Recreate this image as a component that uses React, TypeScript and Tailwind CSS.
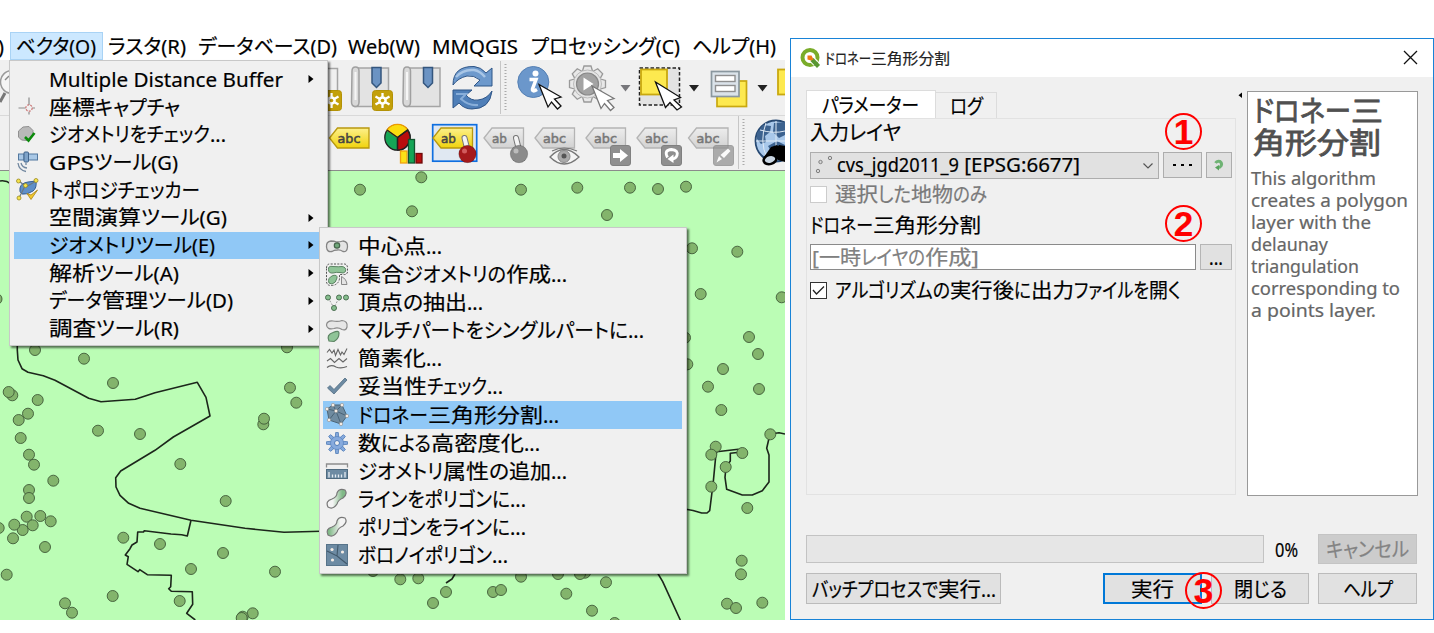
import React, { useLayoutEffect, useRef, useState } from "react";

type Seg = [text: string, width: number];

/* One run of text, scaled horizontally so that it fills the given width. */
function Fit({ text, width }: { text: string; width: number }) {
  const ref = useRef<HTMLSpanElement>(null);
  const [scale, setScale] = useState(1);
  useLayoutEffect(() => {
    if (ref.current && ref.current.offsetWidth > 0) {
      setScale(width / ref.current.getBoundingClientRect().width);
    }
  }, []);
  return (
    <span className="inline-block shrink-0 whitespace-pre" style={{ width }}>
      <span ref={ref} className="inline-block origin-left whitespace-pre" style={{ transform: `scaleX(${scale})` }}>
        {text}
      </span>
    </span>
  );
}

function Text({ segs, className = "" }: { segs: Seg[]; className?: string }) {
  return (
    <span className={`flex shrink-0 whitespace-pre ${className}`}>
      {segs.map(([t, w], i) => (
        <Fit key={i} text={t} width={w} />
      ))}
    </span>
  );
}

/* ------------------------------------------------------------------ map */

const POINTS: [number, number][] = [
  [35, 350], [84, 358.7], [113, 383], [12.3, 395.3], [8.7, 392], [37.7, 400], [28, 413.7], [18.7, 420],
  [98, 430.7], [140, 434], [20.7, 438], [29, 454.7], [34, 464.7], [180.3, 464], [53.3, 480.7], [29, 490],
  [29, 498], [225.7, 501], [26.7, 516.7], [40.3, 516], [50.7, 521.3], [22.7, 530], [14.3, 524.7], [32.7, 525.3],
  [-1.3, 528], [13, 538.3], [45, 547], [123.3, 537.7], [160, 544], [223, 553], [191, 569], [275, 571.7],
  [6.7, 574.7], [112.7, 596], [65, 603.3], [72, 612.7], [179.7, 601], [252.7, 613.3], [242.7, 616.7], [241.7, 618],
  [290, 387.7], [296.3, 402.7], [263.3, 424.3], [264, 418.7], [287, 347.3], [-3.5, 299],
  [360, 189.7], [421.3, 177.3], [412, 211.3], [521, 189.7], [577.3, 187.7], [630, 187.7], [658, 189], [686, 186.7],
  [607, 215], [692, 248.3], [737.3, 251.7], [700.7, 294], [781.7, 297.3], [749, 337], [685, 337.7], [758, 354],
  [687.3, 364.3], [723, 369], [708, 386.7], [759, 389], [721.3, 410], [770.3, 434.3], [715.7, 446.7], [711.3, 454.7],
  [742.3, 453], [725.7, 467], [711.3, 486.7], [747.3, 508], [741.7, 560.7], [741, 574.3], [762.3, 602.7], [727, 603.7],
  [736, 608], [606, 582.3], [558, 574], [585, 572.7], [580, 574], [566.3, 593.7], [592, 610.7], [614.7, 623],
  [400.3, 579.3], [418.3, 578.3], [521, 576.7], [373, 571], [433, 603], [446, 592], [493, 592], [501, 590],
];

const LINES = [
  "M17.3 345V350L18 360L22 368.7L28 372.3L43.3 375.7L55 380.3L88.7 398.3L101 401.7L135.3 399.3L155 392.7L197.3 382.3L206 397.3L210 416L173.3 437L155 450.3L120.7 471L115.7 477.7L116 487L120 495.3L128.7 503.3L140 508.3L191 520.3L245 528.3L284 532.3L330 531",
  "M191 520.3L187.3 536L181.7 534.7L171 534L144.3 530.7L143.5 532L137.7 532L137 542L132 545L130 548.7L125.3 555L128.3 556.7L127 564.3L138 571.7L139.7 569.7L147.3 574.7L171.3 575.3L170.7 586.7L168.7 588.7L171.3 591.3L192.3 591.7L192.7 604.3L186.7 613.3L195.3 620",
  "M785 434L779 432.7L770 434L766.7 448.3L769 455V482L762.3 490.7L752.3 495H742.3L726.7 489.3L725 477.3L726 467L730.3 461V453.3L742 452L738.3 449.3L716.7 451.7L715.7 456.7L713.3 481.7L709.7 510.7L707 513H701.7L693 510.5L686 509.3",
  "M657 572L662.7 581.7L680.3 620",
  "M455 574L452 579L446 583",
  "M0 181Q6 180 11 184",
];

function MapCanvas() {
  return (
    <div className="h-[450px] w-[785px] shrink-0 overflow-hidden border-t border-[#8b8b8b] bg-[#bbfdb5]">
      <svg width="785" height="449" viewBox="0 171 785 449" className="block">
        {LINES.map((d) => (
          <path key={d} d={d} fill="none" stroke="#1c261b" strokeWidth="1.6" strokeLinejoin="round" />
        ))}
        {POINTS.map(([x, y], i) => (
          <circle key={i} cx={x} cy={y} r="5.5" fill="#83b46c" stroke="#3f5a38" strokeWidth="0.9" />
        ))}
      </svg>
    </div>
  );
}

/* ------------------------------------------------------------- toolbars */

/* A slice of the toolbar between x and x + w; children use window coordinates. */
function Slot({ x, w, y, children }: { x: number; w: number; y: number; children?: React.ReactNode }) {
  return (
    <svg width={w} height="55" viewBox={`${x} ${y} ${w} 55`} className="block shrink-0">
      {children}
    </svg>
  );
}

function Star({ x, y }: { x: number; y: number }) {
  return (
    <g transform={`translate(${x} ${y})`}>
      <rect x="0.5" y="0.5" width="20" height="20" rx="3" fill="#c3a00a" stroke="#b39206" />
      <path d="M10.5 3V18M3.5 6.5L17.5 14.5M3.5 14.5L17.5 6.5" stroke="#fff" strokeWidth="2.3" />
      <circle cx="10.5" cy="10.5" r="4.3" fill="#fff" />
      <circle cx="10.5" cy="10.5" r="1.8" fill="#c3a00a" />
    </g>
  );
}

function Scroll({ x }: { x: number }) {
  return (
    <g transform={`translate(${x} 66)`}>
      <path d="M8 2H38.5V40.5H6Q9 38 8.500 34Z" fill="#e3e3e3" stroke="#a5a5a5" strokeWidth="1.5" />
      <path d="M2 5Q2 1 5.500 1Q9 1 9 5V36Q9 40.500 5.500 40.500Q1.500 40.500 1.500 36Z" fill="#d9d9d9" stroke="#a0a0a0" strokeWidth="1.500" />
      <path d="M5.500 6V34" stroke="#f6f6f6" strokeWidth="2" />
      <path d="M22 1.500H31V17L26.500 21.500L22 17Z" fill="#6b93c3" stroke="#34567e" strokeWidth="1.500" />
    </g>
  );
}

function Down({ x, fill }: { x: number; fill: string }) {
  return <path d={`M${x} 85H${x + 10}L${x + 5} 91.500Z`} fill={fill} />;
}

function Cursor({ x, y, stroke }: { x: number; y: number; stroke: string }) {
  return (
    <path
      transform={`translate(${x} ${y})`}
      d="M0 0L22 12.500L15.500 14.500L22 21.500L18.500 24.500L12.500 17.500L9 22.500Z"
      fill="#fff"
      stroke={stroke}
      strokeWidth="1.300"
    />
  );
}

function TagShape({ x, text = "abc", active = false }: { x: number; text?: string; active?: boolean }) {
  return (
    <g>
      <path
        d={`M${x} 138L${x + 8} 128H${x + 39.500}V148H${x + 8}Z`}
        fill={active ? "url(#tagYellow)" : "url(#tagGray)"}
        stroke={active ? "#b8980f" : "#b4b4b4"}
        strokeWidth="1.300"
      />
      <text
        x={x + 8}
        y="143"
        textLength={text === "ab" ? 15 : 23}
        lengthAdjust="spacingAndGlyphs"
        fontSize="12.500"
        stroke={active ? "#444" : "#777"}
        strokeWidth="0.500"
        className={active ? "fill-[#444] font-['DejaVu_Sans',sans-serif]" : "fill-[#777] font-['DejaVu_Sans',sans-serif]"}
      >
        {text}
      </text>
    </g>
  );
}

function Badge({ x, children }: { x: number; children: React.ReactNode }) {
  return (
    <g transform={`translate(${x} 145)`}>
      <rect x="0.500" y="0.500" width="20" height="20" rx="2.500" fill="#8f8f8f" stroke="#808080" />
      {children}
    </g>
  );
}

function Pin({ x, fill, shine }: { x: number; fill: string; shine: string }) {
  return (
    <g>
      <path d={`M${x} 150L${x - 3} 138`} stroke="#777" strokeWidth="6" strokeLinecap="round" />
      <path d={`M${x} 150L${x - 3} 138`} stroke="#f4f4f4" strokeWidth="4" strokeLinecap="round" />
      <circle cx={x} cy="154" r="8.700" fill={fill} stroke="#0003" />
      <circle cx={x - 3} cy="151" r="2.500" fill={shine} opacity="0.600" />
    </g>
  );
}

const GEAR_ANGLES = [0, 45, 90, 135, 180, 225, 270, 315];

function TopToolbar() {
  return (
    <div className="flex h-[55px] w-[785px] shrink-0 overflow-hidden bg-[#f0f0f0]">
      <Slot x={0} w={345} y={60}>
        <circle cx="12" cy="82" r="11.500" fill="#f5f5f5" stroke="#999" strokeWidth="1.500" />
        <path d="M5 80L9 76" stroke="#888" strokeWidth="1.500" />
        <path d="M0 102L5 93" stroke="#777" strokeWidth="3" />
        <path d="M326 68.500H337.500V108" fill="none" stroke="#a5a5a5" strokeWidth="1.500" />
        <Star x={321} y={90} />
      </Slot>
      <Slot x={345} w={51} y={60}>
        <Scroll x={350} />
        <Star x={372} y={90} />
      </Slot>
      <Slot x={396} w={50} y={60}>
        <Scroll x={401.5} />
      </Slot>
      <Slot x={446} w={53} y={60}>
        <path d="M453 85Q453 66 474 66.500Q481 67 486 73L492 68V86H474L480 80Q474 75 467 76Q458 78 453 85Z" fill="#6d99cc" stroke="#2f5688" />
        <path d="M456 77Q463 69 474 70Q480 71 485 77" fill="none" stroke="#a9c6e6" strokeWidth="2.500" />
        <path d="M492 91Q490 109 472 109Q464 109 459 103L453 108V90H472L466 95Q471 101 478 100Q487 99 492 91Z" fill="#4f7fb8" stroke="#2f5688" />
        <path d="M456 94H466L461 99Q469 106 478 105" fill="none" stroke="#88aed9" strokeWidth="2" />
      </Slot>
      <Slot x={499} w={12} y={60}>
        <path d="M500.500 61V114" stroke="#c6c6c6" />
        <path d="M505.500 64V112" stroke="#aaa" strokeWidth="2" strokeDasharray="1 2" />
      </Slot>
      <Slot x={511} w={54} y={60}>
        <circle cx="533.300" cy="82" r="15.500" fill="#6b97cb" stroke="#5580b4" />
        <circle cx="535.500" cy="73.500" r="3" fill="#fff" />
        <path d="M529.500 79.500H536L532.500 89Q532 92.500 537 89.500" fill="none" stroke="#fff" strokeWidth="3.500" />
        <Cursor x={539} y={84.5} stroke="#111" />
      </Slot>
      <Slot x={565} w={52} y={60}>
        <g transform="translate(587.500 84)">
          {GEAR_ANGLES.map((a) => (
            <path key={a} transform={`rotate(${a})`} d="M-5 -13L-3.500 -18H3.500L5 -13" fill="#e8e8e8" stroke="#999" strokeWidth="1.300" />
          ))}
          <circle r="14" fill="#e4e4e4" stroke="#b0b0b0" strokeWidth="0.800" />
          <circle r="11" fill="#a3a3a3" stroke="#888" strokeWidth="1.200" />
          <path d="M-4 -6.500L6 0L-4 6.500Z" fill="#fff" />
        </g>
        <Cursor x={592} y={86} stroke="#777" />
      </Slot>
      <Slot x={617} w={18} y={60}>
        <Down x={620.5} fill="#77777b" />
      </Slot>
      <Slot x={635} w={51} y={60}>
        <rect x="639.500" y="68" width="40" height="37" fill="#e3e3e3" stroke="#222" strokeWidth="1.500" strokeDasharray="3.500 2" />
        <rect x="641" y="69.500" width="26" height="25" fill="#fde94f" stroke="#c9a80f" strokeWidth="1.800" />
        <path d="M655.500 82L680.500 97.500L674 100L681.500 107L677 110L670 102.500L665.500 107.500Z" fill="#fff" stroke="#111" strokeWidth="1.300" />
      </Slot>
      <Slot x={686} w={16} y={60}>
        <Down x={689} fill="#222" />
      </Slot>
      <Slot x={702} w={52} y={60}>
        <rect x="717" y="81" width="29.500" height="25.500" fill="#fde94f" stroke="#c9a80f" strokeWidth="1.700" />
        <rect x="711.500" y="71.500" width="27.500" height="25" fill="#dbe3ea" stroke="#8a979f" strokeWidth="1.700" />
        <rect x="715.500" y="75.500" width="19.500" height="6" fill="#fff" stroke="#8f8f8f" strokeWidth="1.400" />
        <rect x="715.500" y="85.500" width="19.500" height="6" fill="#fff" stroke="#8f8f8f" strokeWidth="1.400" />
      </Slot>
      <Slot x={754} w={20} y={60}>
        <Down x={757.5} fill="#222" />
      </Slot>
      <Slot x={774} w={11} y={60}>
        <rect x="778" y="69.500" width="20" height="25" fill="#fde94f" stroke="#c9a80f" strokeWidth="1.800" />
      </Slot>
    </div>
  );
}

function LabelToolbar() {
  return (
    <div className="flex h-[55px] w-[785px] shrink-0 overflow-hidden border-t border-[#d9d9d9] bg-[#f0f0f0]">
      <Slot x={0} w={374} y={116}>
        <defs>
          <linearGradient id="tagYellow" x1="0" x2="0" y1="0" y2="1">
            <stop offset="0" stopColor="#fdf08b" />
            <stop offset="1" stopColor="#f0d30c" />
          </linearGradient>
          <linearGradient id="tagGray" x1="0" x2="0" y1="0" y2="1">
            <stop offset="0" stopColor="#ededed" />
            <stop offset="1" stopColor="#d2d2d2" />
          </linearGradient>
        </defs>
        <TagShape x={329.5} active />
      </Slot>
      <Slot x={374} w={56} y={116}>
        <g stroke="#222" strokeWidth="1.300">
          <circle cx="397.500" cy="137.500" r="12.700" fill="#15a556" />
          <path d="M397.500 137.500L387 130A12.700 12.700 0 0 1 408 130Z" fill="#fbdc0e" stroke="#ee9b00" />
          <path d="M397.500 137.500L407.500 130A12.700 12.700 0 0 1 397.500 150.200Z" fill="#b90d0d" />
          <path d="M397.500 137.500L387 130M397.500 137.500L408 130M397.500 137.500V150" />
        </g>
        <rect x="400.500" y="151" width="6.500" height="12" fill="#fbe117" stroke="#f0a010" strokeWidth="1.300" />
        <rect x="408.500" y="139.500" width="6" height="23.500" fill="#15a556" stroke="#14532e" strokeWidth="1.300" />
        <rect x="416" y="153.500" width="6" height="9.500" fill="#b90d0d" stroke="#6f0a0a" strokeWidth="1.300" />
      </Slot>
      <Slot x={430} w={50} y={116}>
        <rect x="432.700" y="124.700" width="44" height="36.500" fill="#e0e8f2" stroke="#0f6fe0" strokeWidth="1.700" />
        <TagShape x={433} text="ab" active />
        <Pin x={467.5} fill="#a51a1c" shine="#e88" />
      </Slot>
      <Slot x={480} w={52} y={116}>
        <TagShape x={484} text="ab" />
        <Pin x={519} fill="#8b8b8b" shine="#ddd" />
      </Slot>
      <Slot x={532} w={50} y={116}>
        <TagShape x={535} />
        <path d="M550 157Q564 142 579 157Q564 171 550 157Z" fill="#f4f4f4" stroke="#777" strokeWidth="1.300" />
        <path d="M552 151Q564 145 577 151" fill="none" stroke="#777" strokeWidth="1.200" />
        <circle cx="564" cy="156.500" r="6" fill="#aaa" stroke="#888" />
        <circle cx="564" cy="156" r="2.500" fill="#555" />
      </Slot>
      <Slot x={582} w={52} y={116}>
        <TagShape x={586} />
        <Badge x={610}>
          <path d="M3 8H10V4L18 10.500L10 17V13H3Z" fill="#fff" />
        </Badge>
      </Slot>
      <Slot x={634} w={50} y={116}>
        <TagShape x={637} />
        <Badge x={661}>
          <path d="M6.500 12.500Q2.500 5 10.500 4.500Q17.500 5 16 10.500Q14.500 14 11 14" fill="none" stroke="#fff" strokeWidth="2.800" />
          <path d="M12.500 9.500V18L6.500 14Z" fill="#fff" />
        </Badge>
      </Slot>
      <Slot x={684} w={52} y={116}>
        <TagShape x={688.5} />
        <g opacity="0.700">
          <Badge x={713}>
            <path d="M3.500 17.500L6 11L9 14ZM7.500 10L15 3.500L17.500 6L11 13Z" fill="#fff" />
          </Badge>
        </g>
      </Slot>
      <Slot x={736} w={14} y={116}>
        <path d="M738.500 116V169" stroke="#c6c6c6" />
        <path d="M743.500 119V167" stroke="#aaa" strokeWidth="2" strokeDasharray="1 2" />
      </Slot>
      <Slot x={750} w={35} y={116}>
        <circle cx="776" cy="141" r="20.500" fill="#a9c8ea" stroke="#284a73" strokeWidth="1.800" />
        <path d="M757 133L763 125L771 126L770 132L765 136L766 142L761 144L757 139ZM774 123L785 122V135L779 138L773 132ZM768 146L777 141L785 145V158H775Z" fill="#3c628f" />
        <path d="M776 121V161M756 141H785M766 123Q759 141 767 158M760 130Q774 134 785 131" fill="none" stroke="#dfeaf5" />
        <path d="M774 151L779 145L785 146V162L778 160Z" fill="#000" />
        <path d="M764 157L771 147L777 145L783 151L777 160Z" fill="#000" />
        <ellipse cx="770" cy="159.500" rx="6.500" ry="4.500" fill="#c9d6e3" stroke="#000" strokeWidth="2.500" transform="rotate(-15 770 159.500)" />
      </Slot>
    </div>
  );
}

/* ---------------------------------------------------------------- menus */

const svgBox = { width: 24, height: 24, viewBox: "0 0 24 24", className: "block shrink-0 overflow-visible" };

const icons: Record<string, React.ReactNode> = {
  cross: (
    <svg {...svgBox}>
      <path d="M13 2.500V10M13 17V19.500M2.500 13H9.500M16.500 13H19" stroke="#8b8b8b" strokeWidth="1.200" />
      <circle cx="13" cy="13" r="3.200" fill="none" stroke="#c97070" strokeWidth="1.200" strokeDasharray="2 1.200" />
    </svg>
  ),
  check: (
    <svg {...svgBox}>
      <path d="M2.500 8L7 4L13 3.500L17 7.500L16.500 13.500L11.500 17.500L5.500 17L2.500 14Z" fill="#b9b9b9" stroke="#909090" />
      <path d="M9 14L12.500 17.500L18.500 10" fill="none" stroke="#0b8a0b" strokeWidth="2.600" />
    </svg>
  ),
  gps: (
    <svg {...svgBox}>
      <rect x="2.500" y="4" width="5.500" height="6" fill="#a9c8e6" stroke="#53789f" />
      <rect x="12.500" y="4" width="9" height="6" fill="#a9c8e6" stroke="#53789f" />
      <rect x="8" y="2" width="4.500" height="10" rx="1" fill="#7ea3c9" stroke="#41648b" />
      <path d="M10 12.500V15M2 13Q3 20.500 10 21.500M5 13Q6 17.500 11 18" fill="none" stroke="#71879f" strokeWidth="1.300" />
    </svg>
  ),
  topology: (
    <svg {...svgBox}>
      <path d="M4 10Q5 5 12 4L20 3Q21 10 17 13Q11 17 6 16Q3 14 4 10Z" fill="#5f8fc8" stroke="#365f94" />
      <path d="M3 3L9 8L3 20M20 3L10 9" stroke="#6a7880" strokeWidth="1.200" fill="none" />
      <path d="M11 15.500L15 21.500L21.500 12L15 17Z" fill="#f3c82c" stroke="#a88413" strokeWidth="0.800" />
      {[[2.500, 3], [20, 2.500], [9.500, 7.500], [3, 20]].map(([x, y]) => (
        <circle key={`${x}-${y}`} cx={x} cy={y} r="2" fill="#f5e34b" stroke="#9b8a25" strokeWidth="0.800" />
      ))}
    </svg>
  ),
  centroid: (
    <svg {...svgBox}>
      <path d="M1.500 13Q1 7.500 6 7Q9 7 12 8Q15 8 18 7Q23 7.500 22.500 13Q22 18.500 18 17.500Q15 15.500 12 16Q9 16 7 17.500Q2 18.500 1.500 13Z" fill="#e4e4e4" stroke="#858585" strokeWidth="1.300" />
      <circle cx="12" cy="11.500" r="2.700" fill="#6fa77a" stroke="#46644b" strokeWidth="1.200" />
    </svg>
  ),
  collect: (
    <svg {...svgBox}>
      <path d="M1.500 5Q1.500 0.500 6 1H18Q22.500 0.500 22.500 5V9Q22 12 18 11.500H14.500V16Q13 22.500 6 22.500Q1 22.500 1.500 17Z" fill="none" stroke="#555" strokeDasharray="2 1.300" />
      <path d="M3.500 6.500Q3 2.500 8 3.500Q14 4 17 3.500Q21.500 4 20.500 8.500Q18.500 11 15 9.500Q11 9 8 10Q3.500 10.500 3.500 6.500Z" fill="#8fc497" stroke="#5c8463" />
      <path d="M4 20Q2 15 8 12.500Q12.500 11.500 12 15Q11 20 7 21Z" fill="#8fc497" stroke="#5c8463" />
      <path d="M16.500 13.500Q21.500 16 22 21.500H16.500Z" fill="#e4e4e4" stroke="#888" />
    </svg>
  ),
  vertices: (
    <svg {...svgBox}>
      <path d="M3 6.500L9 17L14 6.500H21" fill="none" stroke="#999" strokeDasharray="2 1.500" />
      {[[3, 6.500], [14, 6.500], [21, 6.500], [9, 17]].map(([x, y]) => (
        <circle key={`${x}-${y}`} cx={x} cy={y} r="2.500" fill="#85bd8d" stroke="#4c7052" />
      ))}
    </svg>
  ),
  single: (
    <svg {...svgBox}>
      <path d="M1.500 6Q2 1.500 8 2Q13 3 17 1.500Q23 2 22 8Q21 12 17 10.500Q13 8 9 9.500Q2 11 1.500 6Z" fill="#e6e6e6" stroke="#8a8a8a" strokeWidth="1.200" />
      <path d="M4 22Q1 16 8 13.500Q14 11 14 14Q14 20 9 22.500Z" fill="#8fc497" stroke="#5c8463" strokeWidth="1.200" />
    </svg>
  ),
  simplify: (
    <svg {...svgBox}>
      <path d="M2 5.500L4.500 2.500L7 6L9 3L10.500 8.500L13 2.500L15.500 8L17 5L19 7.500L22 1.500" fill="none" stroke="#666" strokeWidth="1.100" />
      <path d="M2 14L5.500 11.500L9.500 15.500L14 11.500L18 15L22 11.500" fill="none" stroke="#666" strokeWidth="1.100" />
      <path d="M2 20.500Q6 17 11 20Q16 22 22 19.500" fill="none" stroke="#666" strokeWidth="1.100" />
    </svg>
  ),
  valid: (
    <svg {...svgBox}>
      <path d="M2.500 13L5 10.500L9 14.500L20 3L22 5L9 19Z" fill="#6d8ba3" stroke="#4f6b80" strokeWidth="0.800" />
    </svg>
  ),
  delaunay: (
    <svg {...svgBox}>
      <path d="M2 6L8 2H17L22 13L16 21L4 17Z" fill="#6f8ba0" stroke="#4c6577" />
      <path d="M2 6L11 8L8 2M11 8L17 2M11 8L22 13M11 8L16 21M11 8L4 17" fill="none" stroke="#465f72" strokeWidth="0.900" />
      {[[2, 6], [8, 2], [17, 2], [22, 13], [16, 21], [4, 17], [11, 8]].map(([x, y]) => (
        <circle key={`${x}-${y}`} cx={x} cy={y} r="1.700" fill="#f4ece5" stroke="#8d8d8d" strokeWidth="0.600" />
      ))}
    </svg>
  ),
  gear: (
    <svg {...svgBox}>
      <g transform="translate(12 12)">
        {[0, 45, 90, 135, 180, 225, 270, 315].map((a) => (
          <path key={a} transform={`rotate(${a})`} d="M-1.800 -5L-1.300 -10.500H1.300L1.800 -5" fill="#86aadd" stroke="#4f7cb8" strokeWidth="0.800" />
        ))}
        <circle r="6.500" fill="#86aadd" stroke="#4f7cb8" strokeWidth="0.600" />
        <circle r="2.500" fill="#f0f0f0" stroke="#4f7cb8" />
      </g>
    </svg>
  ),
  ruler: (
    <svg {...svgBox}>
      <path d="M1.500 8.500V5H22.500V8.500" fill="none" stroke="#8d8d8d" strokeWidth="1.300" />
      <rect x="1.500" y="10.500" width="21" height="9" fill="#6d8ba3" stroke="#4f6b80" />
      <path d="M4 18.500V13M7.500 18.500V15.500M10.500 18.500V15.500M13.500 18.500V15.500M16.500 18.500V15.500M20 18.500V13" stroke="#e5ecf1" strokeWidth="1.300" />
    </svg>
  ),
  toPolygon: (
    <svg {...svgBox}>
      <path d="M3 20Q0 14 7 12Q12 10 12 6Q14 1 20 3Q23 7 18 11Q13 13 12 17Q8 23 3 20Z" fill="url(#greenRight)" stroke="#777" strokeWidth="1.200" />
    </svg>
  ),
  toLine: (
    <svg {...svgBox}>
      <path d="M3 20Q0 14 7 12Q12 10 12 6Q14 1 20 3Q23 7 18 11Q13 13 12 17Q8 23 3 20Z" fill="url(#greenLeft)" stroke="#777" strokeWidth="1.200" />
    </svg>
  ),
  voronoi: (
    <svg {...svgBox}>
      <rect x="1.500" y="1.500" width="21" height="21" fill="#6d8ba3" stroke="#57748a" />
      <path d="M2 8L12 13L13 2M12 13L22 21" fill="none" stroke="#41596b" strokeWidth="1.100" />
      {[[7, 6.500], [17.500, 9], [7.500, 17]].map(([x, y]) => (
        <circle key={`${x}-${y}`} cx={x} cy={y} r="1.600" fill="#f4ece5" />
      ))}
    </svg>
  ),
};

interface Item {
  icon?: string;
  segs: Seg[];
  sub?: boolean;
  on?: boolean;
}

const VECTOR_MENU: Item[] = [
  { segs: [["Multiple Distance Buffer", 234]], sub: true },
  { icon: "cross", segs: [["座標", 46], ["キャプチャ", 85]] },
  { icon: "check", segs: [["ジオメトリをチェック", 161], ["...", 16]] },
  { icon: "gps", segs: [["GPS", 45], ["ツール(G)", 84]] },
  { icon: "topology", segs: [["トポロジチェッカー", 151]] },
  { segs: [["空間演算", 92], ["ツール(G)", 86]], sub: true },
  { segs: [["ジオメトリツール(E)", 166]], sub: true, on: true },
  { segs: [["解析", 46], ["ツール(A)", 84]], sub: true },
  { segs: [["データ", 53], ["管理", 46], ["ツール(D)", 85]], sub: true },
  { segs: [["調査", 47], ["ツール(R)", 83]], sub: true },
];

const GEOMETRY_MENU: Item[] = [
  { icon: "centroid", segs: [["中心点", 68], ["...", 16]] },
  { icon: "collect", segs: [["集合", 46], ["ジオメトリの", 102], ["作成", 45], ["...", 16]] },
  { icon: "vertices", segs: [["頂点", 45], ["の", 20], ["抽出", 44], ["...", 16]] },
  { icon: "single", segs: [["マルチパートをシングルパートに", 270], ["...", 16]] },
  { icon: "simplify", segs: [["簡素化", 68], ["...", 16]] },
  { icon: "valid", segs: [["妥当性", 69], ["チェック", 60], ["...", 16]] },
  { icon: "delaunay", segs: [["ドロネー", 70], ["三角形分割", 115], ["...", 16]], on: true },
  { icon: "gear", segs: [["数", 23], ["による", 50], ["高密度化", 93], ["...", 16]] },
  { icon: "ruler", segs: [["ジオメトリ", 85], ["属性", 46], ["の", 20], ["追加", 42], ["...", 16]] },
  { icon: "toPolygon", segs: [["ラインをポリゴンに", 152], ["...", 16]] },
  { icon: "toLine", segs: [["ポリゴンをラインに", 152], ["...", 16]] },
  { icon: "voronoi", segs: [["ボロノイポリゴン", 134], ["...", 16]] },
];

function MenuRow({ item, geometry }: { item: Item; geometry?: boolean }) {
  return (
    <div
      className={`flex items-center ${geometry ? "h-[28.1px] w-[359px]" : "h-[27.7px] w-[307px]"} ${
        item.on ? "bg-[#90c8f6]" : ""
      }`}
    >
      <span className={`ml-[2px] flex shrink-0 ${geometry ? "w-[33px]" : "w-[32.5px]"}`}>
        {item.icon ? icons[item.icon] : null}
      </span>
      <Text segs={item.segs} className="leading-[27px]" />
      {item.sub && (
        <svg width="6" height="10" viewBox="0 0 6 10" className="mr-[7px] ml-auto block">
          <path d="M0.500 1L5.500 5L0.500 9Z" fill="#000" />
        </svg>
      )}
    </div>
  );
}

/* --------------------------------------------------------------- dialog */

function Step({ n, className }: { n: number; className: string }) {
  return (
    <span
      className={`absolute flex h-[37px] w-[37px] items-center justify-center rounded-full border-2 border-[#f00] font-['Liberation_Sans',sans-serif] text-[35px] leading-none font-bold text-[#f00] ${className}`}
    >
      {n}
    </span>
  );
}

function QgisLogo() {
  return (
    <svg width="21" height="21" viewBox="0 0 21 21" className="block shrink-0">
      <circle cx="10" cy="9.500" r="7.500" fill="none" stroke="#7aac29" strokeWidth="4" />
      <path d="M10.500 10L16 15.500" stroke="#fff" strokeWidth="6.500" />
      <path d="M12 11.500L18.500 18.500" stroke="#589632" strokeWidth="4.200" />
      <path d="M7.500 7.500H11.500L13.500 11.500L11 12.500L7.500 11.500Z" fill="#ee7913" />
    </svg>
  );
}

const HELP: Seg[] = [
  ["This algorithm", 125],
  ["creates a polygon", 157],
  ["layer with the", 120],
  ["delaunay", 77],
  ["triangulation", 108],
  ["corresponding to", 149],
  ["a points layer.", 125],
];

function Dialog() {
  return (
    <div className="relative flex h-[582px] w-[644px] shrink-0 flex-col border border-[#1883d7] bg-[#f0f0f0] text-black">
      <div className="flex h-[38px] shrink-0 items-center bg-white pl-[9px]">
        <QgisLogo />
        <Text segs={[["ドロネー", 46], ["三角形分割", 79]]} className="mb-px ml-[4px] text-[15px] leading-[20px] text-[#222]" />
        <svg width="15" height="15" viewBox="0 0 15 15" className="mr-[15px] mb-[2px] ml-auto block">
          <path d="M1 1L14 14M14 1L1 14" stroke="#111" strokeWidth="1.300" />
        </svg>
      </div>

      <div className="flex shrink-0 pt-[14px] pl-[15px]">
        <div className="flex w-[430px] flex-col">
          <div className="flex h-[27px] items-end">
            <div className="flex h-[28px] w-[130px] shrink-0 items-center border border-b-0 border-[#dcdcdc] bg-white pl-[15px]">
              <Text segs={[["パラメーター", 97]]} className="leading-[26px]" />
            </div>
            <div className="flex h-[26px] w-[61px] shrink-0 items-center border border-b-0 border-l-0 border-[#dcdcdc] pl-[14px]">
              <Text segs={[["ログ", 33]]} className="leading-[26px]" />
            </div>
          </div>
          <div className="flex h-[377px] flex-col border border-[#e2e2e2] pl-[3px]">
            <Text segs={[["入力レイヤ", 91]]} className="mb-[7px] h-[26px] items-center leading-[26px]" />
            <div className="flex h-[27px]">
              <div className="flex h-[27px] w-[349px] items-center border border-[#adadad] bg-[#e1e1e1]">
                <svg width="26" height="25" viewBox="0 0 26 25" className="block shrink-0">
                  <g fill="#d8d8d8" stroke="#808080">
                    <circle cx="9.500" cy="9" r="1.700" />
                    <circle cx="19" cy="5" r="1.700" />
                    <circle cx="7" cy="18" r="1.700" />
                  </g>
                </svg>
                <Text segs={[["cvs_jgd2011_9", 122], [" [EPSG:6677]", 121]]} className="mb-[2px] leading-[25px]" />
                <svg width="10" height="6" viewBox="0 0 10 6" className="mr-[5px] ml-auto block">
                  <path d="M0.500 0.500L5 5L9.500 0.500" fill="none" stroke="#555" strokeWidth="1.200" />
                </svg>
              </div>
              <div className="ml-[4px] flex h-[26px] w-[39px] items-center justify-center gap-[5px] border border-[#adadad] bg-[#e1e1e1]">
                <span className="h-[2.500px] w-[3px] bg-black" />
                <span className="h-[2.500px] w-[3px] bg-black" />
                <span className="h-[2.500px] w-[3px] bg-black" />
              </div>
              <div className="ml-[4px] flex h-[26px] w-[26px] items-center justify-center border border-[#adadad] bg-[#e1e1e1]">
                <svg width="10" height="12" viewBox="0 0 10 12" className="block">
                  <path d="M1.500 4Q3 1.500 6 2.500Q8.500 4.500 7 7Q6 8.500 4 8.500" fill="none" stroke="#6fb374" strokeWidth="3" />
                  <path d="M5 6V11.500L1 8.500Z" fill="#57a35c" />
                </svg>
              </div>
            </div>
            <div className="mt-[2px] flex h-[26px] items-center text-[#7a7a7a]">
              <span className="mr-[8px] h-[17px] w-[17px] shrink-0 border border-[#ccc] bg-white" />
              <Text segs={[["選択", 43], ["した", 33], ["地物", 42], ["のみ", 34]]} className="leading-[26px]" />
            </div>
            <Text segs={[["ドロネー", 63], ["三角形分割", 108]]} className="mt-[2px] mb-[2px] h-[32px] items-center leading-[26px]" />
            <div className="mt-[1px] flex h-[27px]">
              <div className="flex h-[26px] w-[386px] items-center border border-[#8a8a8a] bg-white pl-px text-[#808080]">
                <Text segs={[["[一時", 49], ["レイヤの", 64], ["作成]", 54]]} className="leading-[24px]" />
              </div>
              <div className="ml-[4px] flex h-[26px] w-[32px] items-center justify-center border border-[#b5b5b5] bg-[#e1e1e1]">
                <Text segs={[["...", 14]]} className="leading-[24px]" />
              </div>
            </div>
            <div className="mt-[6px] flex h-[26px] items-center">
              <span className="mr-[8px] flex h-[17px] w-[17px] shrink-0 items-center justify-center border border-[#333] bg-white">
                <svg width="13" height="11" viewBox="0 0 13 11" className="block">
                  <path d="M1 5L4.500 9L12 1.500" fill="none" stroke="#222" strokeWidth="1.300" />
                </svg>
              </span>
              <Text segs={[["アルゴリズムの", 115], ["実行後", 64], ["に", 17], ["出力", 43], ["ファイルを", 75], ["開く", 32]]} className="leading-[26px]" />
            </div>
          </div>
        </div>

        <svg width="11" height="12" viewBox="0 0 11 12" className="block shrink-0">
          <path d="M6 1.500V7L2.500 4.200Z" fill="#000" />
        </svg>

        <div className="h-[405px] w-[171px] shrink-0 border border-[#999] bg-white pt-[3px] pl-[3px] text-[#666]">
          <div className="pl-[2px] text-[29px] leading-[32px] text-[#505050] [-webkit-text-stroke:0.8px_#505050]">
            <Text segs={[["ドロネー", 98], ["三", 32]]} />
            <Text segs={[["角形分割", 128]]} />
          </div>
          <div className="mt-[8px] flex flex-col text-[18px] leading-[22px]">
            {HELP.map((line) => (
              <Text key={line[0]} segs={[line]} />
            ))}
          </div>
        </div>
      </div>

      <div className="mt-[38px] flex h-[30px] shrink-0 items-center pl-[15px]">
        <div className="h-[28px] w-[458px] border border-[#c3c3c3] bg-[#e6e6e6]" />
        <Text segs={[["0%", 23]]} className="ml-[11px] w-[43px] leading-[26px]" />
        <div className="flex h-[30px] w-[99px] items-center justify-center border border-[#c4c4c4] bg-[#ccc] text-[#838383]">
          <Text segs={[["キャンセル", 83]]} className="leading-[26px]" />
        </div>
      </div>

      <div className="mt-[9px] flex h-[31px] shrink-0 pl-[15px]">
        <div className="flex w-[195px] items-center justify-center border border-[#bbb] bg-[#e1e1e1]">
          <Text segs={[["バッチプロセスで", 126], ["実行", 43], ["...", 15]]} className="leading-[26px]" />
        </div>
        <div className="ml-[102px] flex w-[99px] items-center justify-center border-2 border-[#0078d7] bg-[#e1e1e1]">
          <Text segs={[["実行", 43]]} className="leading-[26px]" />
        </div>
        <div className="ml-[9px] flex w-[98px] items-center justify-center border border-[#bbb] bg-[#e1e1e1]">
          <Text segs={[["閉じる", 53]]} className="leading-[26px]" />
        </div>
        <div className="ml-[9px] flex w-[99px] items-center justify-center border border-[#bbb] bg-[#e1e1e1]">
          <Text segs={[["ヘルプ", 50]]} className="leading-[26px]" />
        </div>
      </div>

      <Step n={1} className="top-[74px] left-[374px]" />
      <Step n={2} className="top-[166px] left-[374px]" />
      <Step n={3} className="top-[533px] left-[394px]" />
    </div>
  );
}

/* ------------------------------------------------------------------ app */

const MENUBAR: { label: string; w: number; cls: string }[] = [
  { label: "ラスタ(R)", w: 78, cls: "ml-[5px]" },
  { label: "データベース(D)", w: 139, cls: "ml-[12px]" },
  { label: "Web(W)", w: 72, cls: "ml-[11px]" },
  { label: "MMQGIS", w: 86, cls: "ml-[12px]" },
  { label: "プロセッシング(C)", w: 149, cls: "ml-[13px]" },
  { label: "ヘルプ(H)", w: 84, cls: "ml-[12px]" },
];

export default function App() {
  return (
    <div className="relative flex h-[633px] w-[1434px] overflow-hidden bg-white font-['Noto_Sans','Noto_Sans_CJK_JP',sans-serif] text-[20.5px] text-black [font-feature-settings:'palt'] [-webkit-text-stroke:0.2px_currentColor]">
      <div className="flex w-[785px] shrink-0 flex-col pt-[32px]">
        <div className="flex h-[28px] shrink-0 items-center">
          <span className="flex w-[10px] shrink-0 justify-start overflow-hidden">
            <Text segs={[[")", 6]]} className="-ml-[2px] leading-[28px]" />
          </span>
          <div className="flex h-[28px] w-[93px] shrink-0 items-center border border-[#a9d3f5] bg-[#cce8ff] pl-[5px]">
            <Text segs={[["ベクタ(O)", 80]]} className="leading-[26px]" />
          </div>
          {MENUBAR.map((m) => (
            <Text key={m.label} segs={[[m.label, m.w]]} className={`leading-[28px] ${m.cls}`} />
          ))}
        </div>
        <TopToolbar />
        <LabelToolbar />
        <MapCanvas />
      </div>

      <div className="ml-[5px] pt-[38px]">
        <Dialog />
      </div>

      <svg width="0" height="0" className="absolute">
        <defs>
          <linearGradient id="greenRight">
            <stop offset="0.3" stopColor="#f4f4f4" />
            <stop offset="0.8" stopColor="#80b987" />
          </linearGradient>
          <linearGradient id="greenLeft">
            <stop offset="0.1" stopColor="#80b987" />
            <stop offset="0.7" stopColor="#f4f4f4" />
          </linearGradient>
        </defs>
      </svg>

      <div className="absolute top-[60px] left-[9px] h-[286px] w-[319px] border border-[#c8c8c8] bg-[#f0f0f0] pt-[4.5px] pl-[4px] shadow-[2px_2px_2px_rgba(0,0,0,0.55)]">
        {VECTOR_MENU.map((item, i) => (
          <MenuRow key={i} item={item} />
        ))}
      </div>

      <div className="absolute top-[227px] left-[319px] h-[347px] w-[368px] border border-[#c8c8c8] bg-[#f0f0f0] pt-[4.400px] pl-[3px] shadow-[2px_2px_2px_rgba(0,0,0,0.55)]">
        {GEOMETRY_MENU.map((item, i) => (
          <MenuRow key={i} item={item} geometry />
        ))}
      </div>
    </div>
  );
}
